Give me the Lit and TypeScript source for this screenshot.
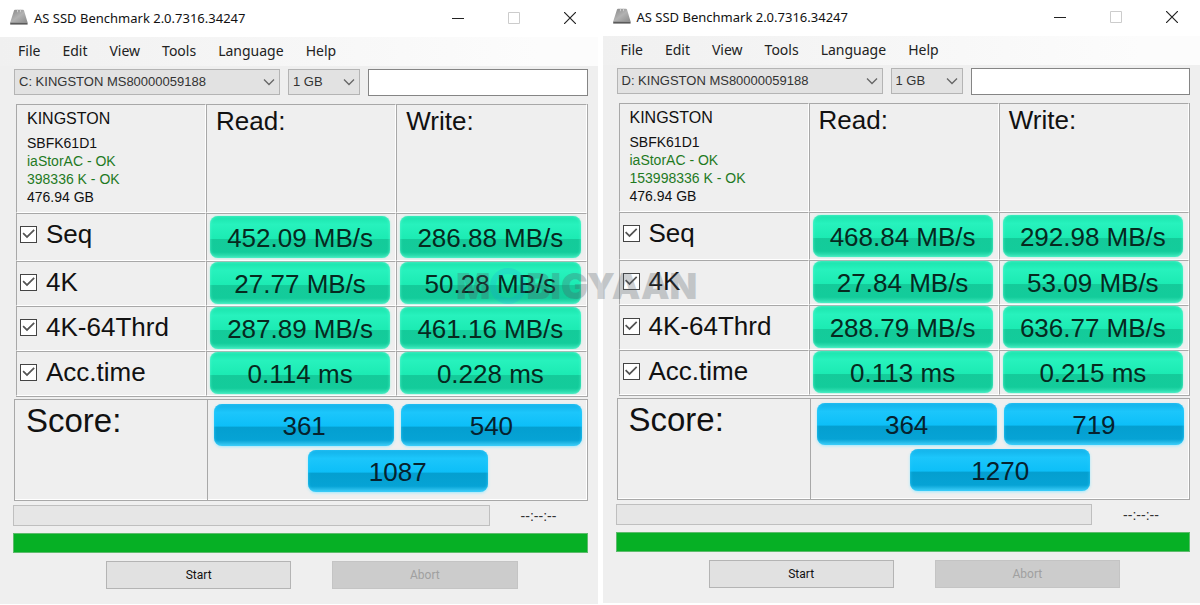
import { LitElement, html, css, svg } from "lit";
import { customElement, property } from "lit/decorators.js";

interface Result {
  name: string;
  read: string;
  write: string;
}

interface Run {
  drive: string;
  driver: string;
  alignment: string;
  results: Result[];
  readScore: string;
  writeScore: string;
  total: string;
}

const RUNS: Run[] = [
  {
    drive: "C: KINGSTON MS80000059188",
    driver: "iaStorAC - OK",
    alignment: "398336 K - OK",
    results: [
      { name: "Seq", read: "452.09 MB/s", write: "286.88 MB/s" },
      { name: "4K", read: "27.77 MB/s", write: "50.28 MB/s" },
      { name: "4K-64Thrd", read: "287.89 MB/s", write: "461.16 MB/s" },
      { name: "Acc.time", read: "0.114 ms", write: "0.228 ms" },
    ],
    readScore: "361",
    writeScore: "540",
    total: "1087",
  },
  {
    drive: "D: KINGSTON MS80000059188",
    driver: "iaStorAC - OK",
    alignment: "153998336 K - OK",
    results: [
      { name: "Seq", read: "468.84 MB/s", write: "292.98 MB/s" },
      { name: "4K", read: "27.84 MB/s", write: "53.09 MB/s" },
      { name: "4K-64Thrd", read: "288.79 MB/s", write: "636.77 MB/s" },
      { name: "Acc.time", read: "0.113 ms", write: "0.215 ms" },
    ],
    readScore: "364",
    writeScore: "719",
    total: "1270",
  },
];

const MENUS = ["File", "Edit", "View", "Tools", "Language", "Help"];

const chevron = html`<svg class="chevron" width="12" height="8" viewBox="0 0 12 8" aria-hidden="true">
  ${svg`<path d="M1 1.5 L6 6.5 L11 1.5" fill="none" stroke="#666" stroke-width="1.3"/>`}
</svg>`;

@customElement("benchmark-window")
export class BenchmarkWindow extends LitElement {
  @property({ attribute: false }) run!: Run;

  static styles = css`
    :host {
      display: block;
      color: #111;
      font-family: "Liberation Sans", Arial, sans-serif;
    }
    .titlebar {
      display: flex;
      box-sizing: border-box;
      align-items: center;
      height: 36px;
      padding: 0 22px 2px 9px;
      background: #fff;
    }
    .title {
      flex: 1;
      margin: 0 0 0 5px;
      font: 400 13px/20px "Noto Sans", sans-serif;
      white-space: nowrap;
    }
    .controls {
      display: flex;
      gap: 44px;
    }
    .controls button {
      display: flex;
      width: 12px;
      height: 14px;
      padding: 0;
      border: 0;
      background: none;
      align-items: center;
      justify-content: center;
    }
    .controls svg {
      flex: none;
    }
    .body {
      background: #efefef;
      padding-bottom: 15px;
    }
    .menubar {
      display: flex;
      box-sizing: border-box;
      gap: 22px;
      height: 29px;
      padding: 0 0 2px 18px;
      align-items: center;
      background: linear-gradient(90deg, #f0f0f0, #fcfcfc 90%);
    }
    .menubar button {
      padding: 0;
      border: 0;
      background: none;
      color: #222;
      font: 14px/20px "Noto Sans", sans-serif;
    }
    .toolbar {
      display: flex;
      gap: 8px;
      padding: 3px 10px 0 14px;
    }
    .picker {
      position: relative;
      height: 26px;
    }
    .drive {
      width: 266px;
    }
    .size {
      width: 72px;
    }
    select {
      appearance: none;
      box-sizing: border-box;
      width: 100%;
      height: 26px;
      padding: 0 4px;
      border: 1px solid #b4b4b4;
      border-radius: 0;
      background: #e2e2e2;
      color: #333;
      font: 13px/20px "Liberation Sans", Arial, sans-serif;
    }
    .chevron {
      position: absolute;
      right: 5px;
      top: 9px;
      pointer-events: none;
    }
    .filter {
      flex: 1;
      min-width: 0;
      box-sizing: border-box;
      height: 27px;
      border: 1px solid #858585;
      background: #fff;
    }
    .results {
      width: calc(100% - 26px);
      margin: 8px 10px 0 16px;
      border-collapse: separate;
      border-spacing: 0;
      border-right: 1px solid #a8a8a8;
      border-bottom: 1px solid #a8a8a8;
      table-layout: fixed;
    }
    .names {
      width: 190px;
    }
    .results th,
    .results td {
      box-sizing: border-box;
      padding: 0;
      border: 1px solid #a8a8a8;
      border-right-color: #fff;
      border-bottom-color: #fff;
      text-align: left;
      vertical-align: top;
      font-weight: 400;
    }
    .summary {
      height: 109px;
    }
    .results .heading {
      padding-left: 9px;
      font-size: 26px;
      line-height: 32px;
    }
    .results .info {
      padding: 4px 0 0 10px;
      font-size: 14px;
      line-height: 18px;
      white-space: nowrap;
    }
    .info p {
      margin: 0;
    }
    .info .model {
      margin-bottom: 5px;
      font-size: 16px;
      line-height: 20px;
    }
    .info .ok {
      color: #1f7a1f;
    }
    .row {
      height: 45px;
    }
    .first {
      height: 48px;
    }
    .check {
      display: flex;
      gap: 9px;
      padding: 3px 0 0 3px;
      align-items: center;
      font-size: 26px;
      line-height: 34px;
    }
    .check input {
      appearance: none;
      box-sizing: border-box;
      width: 17px;
      height: 17px;
      margin: 0;
      border: 1px solid #444;
      background: #fff;
    }
    .check input:checked::before {
      content: "";
      display: block;
      height: 15px;
      background: #555;
      clip-path: polygon(10% 48%, 18% 40%, 40% 62%, 84% 18%, 92% 26%, 40% 78%);
    }
    .pill {
      display: block;
      box-sizing: border-box;
      height: 42px;
      padding-top: 3px;
      border-radius: 8px;
      color: #06291f;
      font-size: 26px;
      line-height: 38px;
      text-align: center;
      white-space: nowrap;
    }
    .green {
      margin: 0 5px 0 3px;
      background: linear-gradient(#1be3ac, #27f2bd 20%, #1cebb3 54%, #14cb9a 56%, #13cc9b 86%, #3ce8bb);
      box-shadow: inset 0 0 3px #5ff5d0, 0 0 2px #8ff5dc;
    }
    .first .green {
      margin-top: 2px;
    }
    .blue {
      background: linear-gradient(#12b0e8, #1cc6fb 20%, #0dbff8 52%, #049fd0 56%, #06a3d5 86%, #3fcdf8);
      box-shadow: inset 0 0 3px #35cdfc, 0 1px 3px #9eeaff;
      color: #06222e;
    }
    .score {
      display: grid;
      grid-template-columns: 193px 1fr;
      height: 102px;
      box-sizing: border-box;
      margin: 2px 10px 0 14px;
      border: 1px solid #a8a8a8;
      box-shadow: inset 0 -1px #fff, inset -1px 0 #fff;
    }
    .score h2 {
      margin: 0;
      padding-left: 11px;
      border-right: 1px solid #a8a8a8;
      font-size: 33px;
      font-weight: 400;
      line-height: 42px;
    }
    .scores {
      display: grid;
      grid-template-columns: 1fr 1fr;
      gap: 4px 7px;
      padding: 4px 5px 0 6px;
      align-content: start;
    }
    .total {
      grid-column: 1 / 3;
      justify-self: center;
      width: 49%;
    }
    .status {
      display: flex;
      margin: 4px 10px 0 13px;
      align-items: center;
    }
    .progress {
      flex: 1;
      height: 19px;
      border: 1px solid #bfbfbf;
      background: #e6e6e6;
    }
    .time {
      width: 98px;
      color: #333;
      font-size: 14px;
      line-height: 20px;
      text-align: center;
    }
    .overall {
      height: 18px;
      margin: 7px 10px 0 13px;
      border: 1px solid #5dbb6c;
      background: #06b025;
    }
    .actions {
      display: flex;
      gap: 41px;
      margin-top: 8px;
      padding: 0 80px 0 106px;
    }
    .actions button {
      flex: 1;
      height: 28px;
      padding: 0;
      border: 1px solid #b4b4b4;
      background: #e1e1e1;
      color: #111;
      font: 12px/20px Roboto, sans-serif;
    }
    .actions button:disabled {
      border-color: #c4c4c4;
      background: #cccccc;
      color: #a0a0a0;
    }
  `;

  render() {
    const r = this.run;
    return html`
      <header class="titlebar">
        <svg width="20" height="18" viewBox="0 0 20 18" aria-hidden="true">
          <defs>
            <linearGradient id="metal" x1="0" y1="0" x2="1" y2="1">
              <stop offset="0" stop-color="#858585" />
              <stop offset="0.5" stop-color="#b2b2b2" />
              <stop offset="1" stop-color="#8c8c8c" />
            </linearGradient>
          </defs>
          <path d="M5 1.5 Q5.3 .8 6 .8 H14 Q14.8 .8 15 1.5 L18.6 13.5 H1.2 Z" fill="url(#metal)" />
          <path d="M1.2 13.5 H18.6 V15.6 H1.2 Z" fill="#5a5a5a" />
          <path d="M8.5 .8 v2.4 M11.5 .8 v2.4" stroke="#ccc" />
        </svg>
        <h1 class="title">AS SSD Benchmark 2.0.7316.34247</h1>
        <div class="controls">
          <button aria-label="Minimize">
            <svg width="12" height="12"><path d="M0 6.5 H12" stroke="#222" /></svg>
          </button>
          <button aria-label="Maximize" disabled>
            <svg width="12" height="12"><path d="M.5 .5 H11.5 V11.5 H.5 Z" fill="none" stroke="#ccc" /></svg>
          </button>
          <button aria-label="Close">
            <svg width="12" height="12"><path d="M0 0 L12 12 M12 0 L0 12" stroke="#222" stroke-width="1.2" /></svg>
          </button>
        </div>
      </header>
      <div class="body">
        <nav class="menubar">${MENUS.map((m) => html`<button>${m}</button>`)}</nav>
        <div class="toolbar">
          <div class="picker drive">
            <select aria-label="Drive"><option>${r.drive}</option></select>${chevron}
          </div>
          <div class="picker size">
            <select aria-label="Test size"><option>1 GB</option></select>${chevron}
          </div>
          <input class="filter" type="text" aria-label="Remark" />
        </div>
        <table class="results">
          <colgroup><col class="names" /><col /><col /></colgroup>
          <tr class="summary">
            <td class="info">
              <p class="model">KINGSTON</p>
              <p>SBFK61D1</p>
              <p class="ok">${r.driver}</p>
              <p class="ok">${r.alignment}</p>
              <p>476.94 GB</p>
            </td>
            <th class="heading" scope="col">Read:</th>
            <th class="heading" scope="col">Write:</th>
          </tr>
          ${r.results.map(
            (t, i) => html`<tr class=${i === 0 ? "first" : "row"}>
              <th scope="row"><label class="check"><input type="checkbox" checked />${t.name}</label></th>
              <td><span class="pill green">${t.read}</span></td>
              <td><span class="pill green">${t.write}</span></td>
            </tr>`
          )}
        </table>
        <section class="score">
          <h2>Score:</h2>
          <div class="scores">
            <span class="pill blue">${r.readScore}</span>
            <span class="pill blue">${r.writeScore}</span>
            <span class="pill blue total">${r.total}</span>
          </div>
        </section>
        <div class="status">
          <div class="progress" role="progressbar" aria-label="Current test"></div>
          <span class="time">--:--:--</span>
        </div>
        <div class="overall" role="progressbar" aria-label="Overall" aria-valuenow="100"></div>
        <div class="actions">
          <button>Start</button>
          <button disabled>Abort</button>
        </div>
      </div>
    `;
  }
}

@customElement("app-root")
export class AppRoot extends LitElement {
  static styles = css`
    :host {
      display: block;
      position: relative;
      background: #fff;
    }
    .windows {
      display: grid;
      grid-template-columns: 1fr 1fr;
      gap: 5px;
      align-items: start;
    }
    .left {
      padding-top: 1px;
    }
    .watermark {
      position: absolute;
      left: 38%;
      top: 265px;
      display: flex;
      align-items: center;
      color: #505a64;
      font: 900 36px/42px Inter, sans-serif;
      opacity: 0.28;
      pointer-events: none;
    }
  `;

  render() {
    return html`
      <main class="windows">
        <benchmark-window class="left" .run=${RUNS[0]}></benchmark-window>
        <benchmark-window .run=${RUNS[1]}></benchmark-window>
      </main>
      <div class="watermark">
        <span>M</span>
        <svg width="36" height="42" viewBox="0 0 36 42" aria-hidden="true">
          <circle cx="18" cy="21" r="15" fill="none" stroke="#1e9be0" stroke-width="6" stroke-opacity="0.7" />
        </svg>
        <span>BIGYAAN</span>
      </div>
    `;
  }
}
